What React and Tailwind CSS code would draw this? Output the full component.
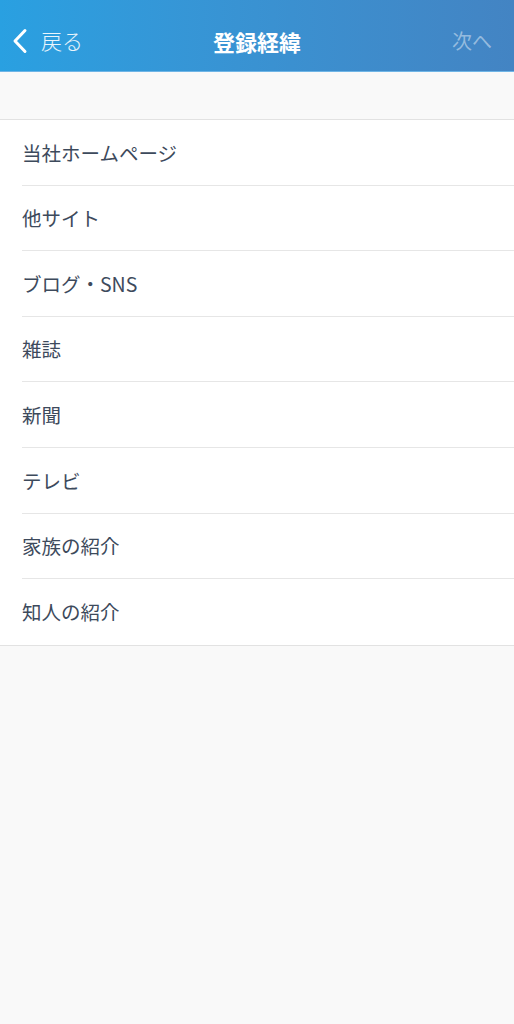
import React from "react";

const items = [
  "当社ホームページ",
  "他サイト",
  "ブログ・SNS",
  "雑誌",
  "新聞",
  "テレビ",
  "家族の紹介",
  "知人の紹介",
];

const font = { fontFamily: '"Noto Sans CJK JP", "Noto Sans", sans-serif' };

export default function App() {
  return (
    <div className="min-h-[1024px] bg-[#f9f9f9]" style={font}>
      <header className="relative h-[72px] bg-gradient-to-r from-[#29a0e1] to-[#4384c3] border-b border-[#6fb5e6] flex items-center pl-3 pr-[22px] pt-[10px]">
        <button className="flex items-center gap-[13px] text-white">
          <svg width="16" height="26" viewBox="0 0 16 26" fill="none">
            <path d="M13 2.5 L3 13 L13 23.5" stroke="white" strokeWidth="3" strokeLinecap="round" strokeLinejoin="round" />
          </svg>
          <span className="text-[21px] font-light text-white/90 leading-none">戻る</span>
        </button>
        <h1 className="absolute left-0 right-0 text-center text-[22px] font-bold text-white leading-none pointer-events-none">
          登録経緯
        </h1>
        <span className="ml-auto text-[20px] text-white/45 leading-none">次へ</span>
      </header>

      <div className="h-[47px]" />

      <ul className="bg-white border-t border-b border-[#e2e2e2]">
        {items.map((t, i) => (
          <li key={t} className="pl-[22px]">
            <div
              className={
                "h-[65.6px] flex items-center text-[19.5px] text-[#3d4a5c] " +
                (i < items.length - 1 ? "border-b border-[#e6e6e6]" : "")
              }
            >
              {t}
            </div>
          </li>
        ))}
      </ul>
    </div>
  );
}
